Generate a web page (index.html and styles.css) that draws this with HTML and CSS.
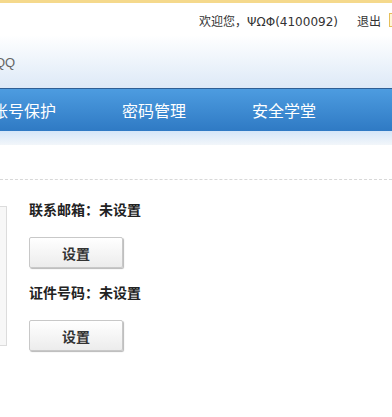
FILE: index.html
```html
<!DOCTYPE html>
<html>
<head>
<meta charset="UTF-8">
<title>QQ安全中心</title>
<link rel="stylesheet" href="styles.css">
</head>
<body>
<div class="topbar">
  <span class="welcome">欢迎您，<span class="nick">ΨΩΦ(4100092)</span></span>
  <a class="logout" href="#">退出</a>
  <span class="tip"></span>
</div>
<div class="header">
  <span class="logo">QQ</span>
</div>
<div class="nav">
  <ul class="menu">
    <li>账号保护</li>
    <li>密码管理</li>
    <li>安全学堂</li>
  </ul>
</div>
<div class="subnav"></div>
<div class="divider"></div>
<div class="main">
  <div class="side"></div>
  <div class="info">
    <div class="item">
      <p class="label">联系邮箱：未设置</p>
      <button class="btn">设置</button>
    </div>
    <div class="item">
      <p class="label">证件号码：未设置</p>
      <button class="btn">设置</button>
    </div>
  </div>
</div>
</body>
</html>
```

FILE: styles.css
```css
html, body{
  margin:0;
  padding:0;
  background:#fff;
  overflow:hidden;
}
body{
  font-family:"Noto Sans CJK SC", "Liberation Sans", sans-serif;
  width:392px;
}
ul, p{
  margin:0;
  padding:0;
}
.topbar{
  height:30px;
  border-top:3px solid #f5d98c;
  display:flex;
  align-items:center;
  justify-content:flex-end;
  font-size:12px;
  color:#333;
  padding-top:2px;
}
.nick{
  font-family:"DejaVu Sans", sans-serif;
  font-size:12px;
}
.logout{
  color:#333;
  text-decoration:none;
  margin-left:19px;
}
.tip{
  width:10px;
  height:12px;
  margin-left:8px;
  margin-right:-9px;
  border:1px solid #e6bf5a;
  background:#fff6d6;
}
.header{
  height:53px;
  background:linear-gradient(#fff, #dde9f7);
  display:flex;
  align-items:center;
}
.logo{
  font-family:"Liberation Sans", sans-serif;
  font-size:13px;
  color:#666;
  margin-left:-5px;
  margin-top:2px;
}
.nav{
  height:42px;
  border-top:1px solid #2f5f95;
  background:linear-gradient(#4d9ce0, #2f7ac4);
  overflow:hidden;
}
.menu{
  list-style:none;
  display:flex;
  margin-left:-41px;
}
.menu li{
  width:130px;
  flex:none;
  text-align:center;
  line-height:42px;
  font-size:16px;
  color:#fff;
}
.subnav{
  height:14px;
  background:linear-gradient(#d4e6f8, #f2f6fa);
}
.divider{
  height:34px;
  border-bottom:1px dashed #d8d8d8;
}
.main{
  display:flex;
  padding-top:26px;
}
.side{
  width:8px;
  height:138px;
  margin-left:-2px;
  background:#f7f7f7;
  border:1px solid #dcdcdc;
  border-left:none;
}
.info{
  margin-left:22px;
}
.item{
  margin-bottom:13px;
}
.item:first-child{
  margin-top:-8px;
}
.label{
  font-size:14px;
  font-weight:bold;
  color:#222;
  line-height:22px;
}
.btn{
  display:block;
  margin-top:17px;
  width:94px;
  height:31px;
  font-family:"Noto Sans CJK SC", sans-serif;
  font-size:14px;
  font-weight:bold;
  color:#333;
  background:linear-gradient(#fff, #ececec);
  border:1px solid #c8c8c8;
  border-radius:2px;
  box-shadow:1px 1px 1px #b8b8b8;
  padding:0;
}
```
